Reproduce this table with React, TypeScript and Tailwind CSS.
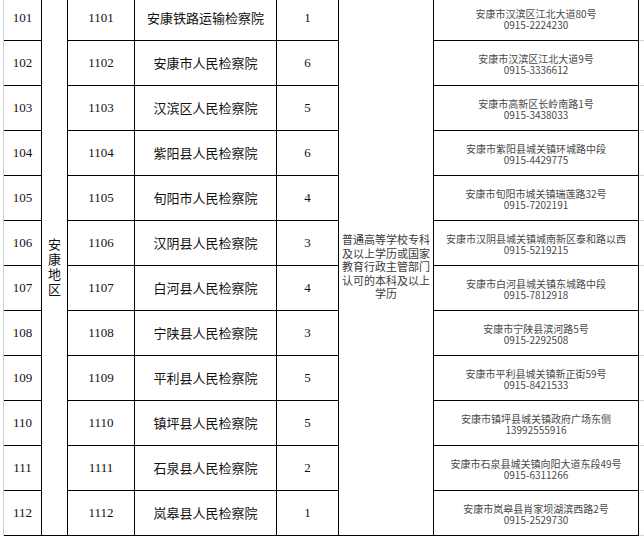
import React from 'react';

type Row = {
  no: number;
  code: number;
  name: string;
  count: number;
  address: string;
  phone: string;
};

const rows: Row[] = [
  { no: 101, code: 1101, name: '安康铁路运输检察院', count: 1, address: '安康市汉滨区江北大道80号', phone: '0915-2224230' },
  { no: 102, code: 1102, name: '安康市人民检察院', count: 6, address: '安康市汉滨区江北大道9号', phone: '0915-3336612' },
  { no: 103, code: 1103, name: '汉滨区人民检察院', count: 5, address: '安康市高新区长岭南路1号', phone: '0915-3438033' },
  { no: 104, code: 1104, name: '紫阳县人民检察院', count: 6, address: '安康市紫阳县城关镇环城路中段', phone: '0915-4429775' },
  { no: 105, code: 1105, name: '旬阳市人民检察院', count: 4, address: '安康市旬阳市城关镇瑞莲路32号', phone: '0915-7202191' },
  { no: 106, code: 1106, name: '汉阴县人民检察院', count: 3, address: '安康市汉阴县城关镇城南新区泰和路以西', phone: '0915-5219215' },
  { no: 107, code: 1107, name: '白河县人民检察院', count: 4, address: '安康市白河县城关镇东城路中段', phone: '0915-7812918' },
  { no: 108, code: 1108, name: '宁陕县人民检察院', count: 3, address: '安康市宁陕县滨河路5号', phone: '0915-2292508' },
  { no: 109, code: 1109, name: '平利县人民检察院', count: 5, address: '安康市平利县城关镇新正街59号', phone: '0915-8421533' },
  { no: 110, code: 1110, name: '镇坪县人民检察院', count: 5, address: '安康市镇坪县城关镇政府广场东侧', phone: '13992555916' },
  { no: 111, code: 1111, name: '石泉县人民检察院', count: 2, address: '安康市石泉县城关镇向阳大道东段49号', phone: '0915-6311266' },
  { no: 112, code: 1112, name: '岚皋县人民检察院', count: 1, address: '安康市岚皋县肖家坝湖滨西路2号', phone: '0915-2529730' },
];

const cell = 'flex items-center justify-center border-r border-b border-black';

export default function App() {
  return (
    <div className="w-[644px] h-[537px] overflow-hidden bg-white pl-[3px] font-['Liberation_Serif','Noto_Sans_CJK_SC',serif] text-[13px] text-[#111]">
      {/* Spreadsheet grid: region + requirement columns span every row */}
      <div className="-mt-[4px] grid grid-cols-[38px_26px_67px_142px_62px_95px_205px_6px] grid-rows-[repeat(12,45px)] border-l border-[#cfcfcf]">
        {rows.map((r, i) => (
          <React.Fragment key={r.no}>
            <div className={cell}>{r.no}</div>
            {i === 0 && (
              <div className="row-span-12 flex items-center justify-center border-r border-b border-black">
                <span className="[writing-mode:vertical-rl] tracking-[2px] leading-[13px] font-['Noto_Sans_CJK_SC',sans-serif] text-[13px] pt-[4px]">
                  安康地区
                </span>
              </div>
            )}
            <div className={cell}>{r.code}</div>
            <div className={`${cell} font-['Noto_Sans_CJK_SC',sans-serif] text-[13px]`}>{r.name}</div>
            <div className={cell}>{r.count}</div>
            {i === 0 && (
              <div className="row-span-12 flex items-center justify-center border-r border-b border-black">
                <p className="w-[89px] text-center text-[11px] leading-[13.4px] text-[#3a3a3a] font-['Noto_Sans_CJK_SC',sans-serif] pt-[3px] break-all">
                  普通高等学校专科及以上学历或国家教育行政主管部门认可的本科及以上学历
                </p>
              </div>
            )}
            <div className={`${cell} pt-[2px]`}>
              <p className="whitespace-pre-line text-center text-[10px] leading-[11px] text-[#4a4a4a] font-['Noto_Sans_CJK_SC',sans-serif]">
                {`${r.address}\n${r.phone}`}
              </p>
            </div>
            <div className="border-r border-b border-[#d4d4d4]" />
          </React.Fragment>
        ))}
      </div>
    </div>
  );
}
